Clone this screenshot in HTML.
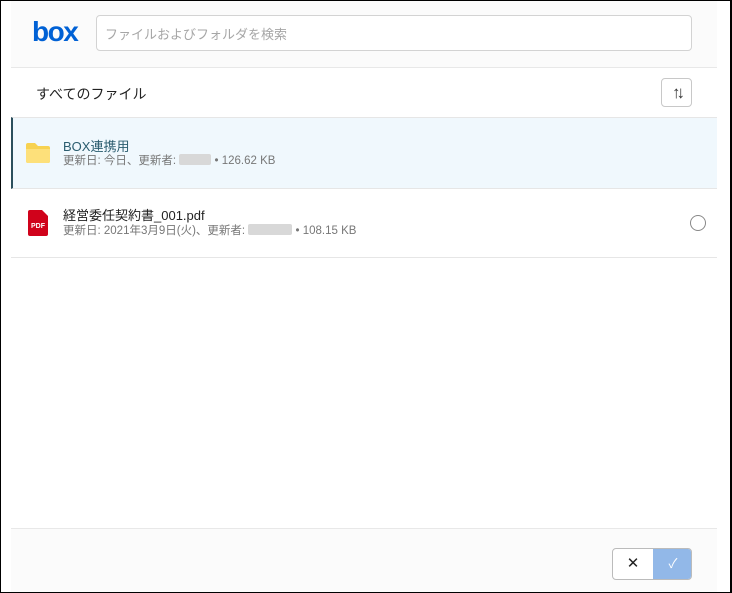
<!DOCTYPE html>
<html><head><meta charset="utf-8"><style>
*{box-sizing:border-box;margin:0;padding:0}
body{width:732px;height:593px;overflow:hidden;background:#fff;font-family:"Liberation Sans","Noto Sans CJK JP",sans-serif;position:relative}
.frame{position:absolute;left:0;top:0;width:732px;height:593px;border:1px solid #000;border-right:2px solid #000}
.abs{position:absolute}
.hdr{left:11px;top:1px;width:706px;height:67px;background:#fbfbfb;border-bottom:1px solid #e8e8e8}
.search{left:96px;top:15px;width:596px;height:36px;border:1px solid #d3d3d3;border-radius:4px;background:#fff;font-size:13px;color:#a6a6a6;padding:8px 8px}
.title{left:36px;top:84px;font-size:14px;color:#222}
.sort{left:661px;top:78px;width:31px;height:29px;border:1px solid #c8c8c8;border-radius:4px;background:#fff;font-size:17px;color:#333;text-align:center;line-height:27px;letter-spacing:-4px}
.row1{left:11px;top:117px;width:706px;height:72px;background:#f0f8fd;border-top:1px solid #e6e6e6;border-bottom:1px solid #e6e6e6;border-left:2px solid #2b4f5d}
.row2{left:11px;top:257px;width:706px;height:1px;background:#e6e6e6}
.name{font-size:13px;color:#222}
.meta{font-size:11.5px;color:#777}
.blur{display:inline-block;background:#d8d8d8;height:11px;vertical-align:-1px;border-radius:2px}
.ftr{left:11px;top:528px;width:706px;height:64px;background:#fbfbfb;border-top:1px solid #e8e8e8}
</style></head><body>
<div class="abs hdr"></div>
<div class="abs" style="left:32px;top:16px;font-size:28px;font-weight:bold;color:#0061d5;letter-spacing:-1.5px">box</div>
<div class="abs search">ファイルおよびフォルダを検索</div>
<div class="abs title">すべてのファイル</div>
<div class="abs sort">↑↓</div>
<div class="abs row1"></div>
<svg class="abs" style="left:25px;top:142px" width="26" height="22" viewBox="0 0 26 22"><path d="M1 3a2 2 0 0 1 2-2h7l3 3h10a2 2 0 0 1 2 2v13a2 2 0 0 1-2 2H3a2 2 0 0 1-2-2z" fill="#f7d251"/><path d="M1 7h24v12a2 2 0 0 1-2 2H3a2 2 0 0 1-2-2z" fill="#fde07a"/></svg>
<div class="abs name" style="left:63px;top:136px;color:#2b5d6f">BOX連携用</div>
<div class="abs meta" style="left:63px;top:152px">更新日: 今日、更新者: <span class="blur" style="width:32px"></span> • 126.62 KB</div>
<svg class="abs" style="left:28px;top:210px" width="20" height="26" viewBox="0 0 20 26"><path d="M2 0h12l6 6v18a2 2 0 0 1-2 2H2a2 2 0 0 1-2-2V2a2 2 0 0 1 2-2z" fill="#d0021b"/><text x="10" y="18" font-size="7" font-weight="bold" fill="#fff" text-anchor="middle" font-family="Liberation Sans">PDF</text></svg>
<div class="abs name" style="left:63px;top:205px">経営委任契約書_001.pdf</div>
<div class="abs meta" style="left:63px;top:222px">更新日: 2021年3月9日(火)、更新者: <span class="blur" style="width:44px"></span> • 108.15 KB</div>
<div class="abs" style="left:690px;top:215px;width:16px;height:16px;border:1px solid #888;border-radius:50%;background:#fff"></div>
<div class="abs row2"></div>
<div class="abs ftr"></div>
<div class="abs" style="left:612px;top:548px;width:80px;height:32px;border:1px solid #bbb;border-radius:4px;background:#fff;overflow:hidden">
<div class="abs" style="left:0;top:0;width:40px;height:30px;text-align:center;line-height:30px;font-size:15px;color:#222">✕</div>
<div class="abs" style="left:40px;top:0;width:40px;height:30px;background:#92b8e8;text-align:center;line-height:30px;font-size:13px;color:#fff">✓</div>
</div>
<div class="frame"></div>
</body></html>
